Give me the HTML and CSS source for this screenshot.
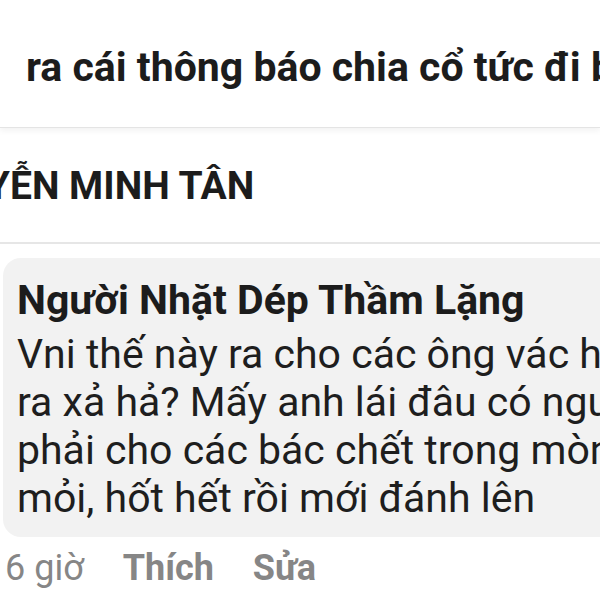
FILE: index.html
```html
<!DOCTYPE html>
<html lang="vi">
<head>
  <meta charset="UTF-8" />
  <meta name="viewport" content="width=device-width, initial-scale=1" />
  <title>Bình luận</title>
  <link rel="stylesheet" href="styles.css">
</head>
<body>
  <!-- Dòng cuối của bài viết -->
  <div class="post-text">ra cái thông báo chia cổ tức đi b</div>

  <!-- Tên người đăng -->
  <div class="author-row">
    <span class="author-name">NGUYỄN MINH TÂN</span>
  </div>

  <!-- Bình luận -->
  <div class="comment">
    <div class="bubble">
      <div class="commenter">Người Nhặt Dép Thầm Lặng</div>
      <div class="comment-body">
        <div>Vni thế này ra cho các ông vác hàng</div>
        <div>ra xả hả? Mấy anh lái đâu có ngu</div>
        <div>phải cho các bác chết trong mòn</div>
        <div>mỏi, hốt hết rồi mới đánh lên</div>
      </div>
    </div>
    <div class="actions">
      <span class="time">6 giờ</span>
      <span class="action">Thích</span>
      <span class="action">Sửa</span>
    </div>
  </div>
</body>
</html>
```

FILE: styles.css
```css
body {
  margin: 0;
  width: 600px;
  height: 600px;
  overflow: hidden;
  background-color: #ffffff;
  font-family: Roboto, "Liberation Sans", sans-serif;
  color: #1c1c1c;
  white-space: nowrap;
}
.post-text {
  height: 128px;
  padding-left: 26px;
  box-sizing: border-box;
  padding-top: 43px;
  font-size: 41px;
  font-weight: bold;
  line-height: 48px;
  border-bottom: 1px solid #e4e4e4;
  box-shadow: 0 3px 6px rgba(0,0,0,0.05);
}
.author-row {
  height: 116px;
  box-sizing: border-box;
  padding-top: 35px;
  border-bottom: 2px solid #e6e6e6;
}
.author-name {
  display: block;
  margin-left: -94px;
  font-size: 39px;
  font-weight: bold;
  line-height: 46px;
}
.comment {
  padding-left: 3px;
  padding-top: 14px;
}
.bubble {
  background-color: #f2f2f2;
  border-radius: 18px 0 0 18px;
  margin-right: -40px;
  padding: 18px 0 15px 14px;
}
.commenter {
  font-size: 41px;
  font-weight: bold;
  line-height: 48px;
  margin-bottom: 6px;
}
.comment-body {
  font-size: 41px;
  line-height: 48px;
  color: #1e1e1e;
}
.actions {
  padding-top: 10px;
  padding-left: 2px;
  font-size: 36px;
  line-height: 42px;
  color: #868686;
}
.time {
  margin-right: 30px;
}
.action {
  font-weight: bold;
  margin-right: 30px;
}
```
